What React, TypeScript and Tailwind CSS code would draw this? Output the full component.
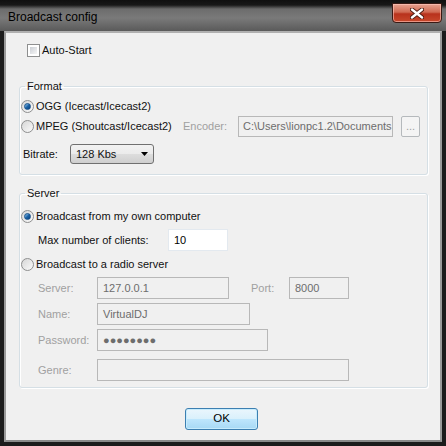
import React from 'react';

const font = { fontFamily: '"Liberation Sans", Arial, sans-serif' };

function Radio({ checked }: { checked?: boolean }) {
  return (
    <span className="w-[13px] h-[13px] rounded-full border border-[#8e8f8f] bg-gradient-to-br from-[#d6d6d6] to-[#fbfbfb] flex items-center justify-center shrink-0">
      {checked && (
        <span className="w-[7px] h-[7px] rounded-full bg-gradient-to-br from-[#9bd0f3] via-[#1b64a8] to-[#0b3f7a] border border-[#16508a]" />
      )}
    </span>
  );
}

function Checkbox() {
  return (
    <span className="w-[13px] h-[13px] border border-[#8e8f8f] bg-white p-[2px] shrink-0">
      <span className="block w-full h-full bg-gradient-to-br from-[#cbcfd5] to-[#f6f6f6]" />
    </span>
  );
}

function Field({ value, w, enabled }: { value: string; w: string; enabled?: boolean }) {
  return (
    <div
      className={`${w} h-[22px] border flex items-center px-[5px] text-[11px] ${
        enabled ? 'bg-white border-[#e3e9ef] text-black' : 'bg-[#f0f0f0] border-[#b8b8b8] text-[#6d6d6d]'
      }`}
    >
      {value}
    </div>
  );
}

export default function App() {
  return (
    <div className="w-[446px] h-[446px] bg-[#1c1c1c] flex flex-col overflow-hidden select-none" style={font}>
      {/* title bar */}
      <div className="h-[31px] shrink-0 flex items-start bg-[linear-gradient(180deg,#101010_0px,#181818_5px,#6c6c6c_9px,#7a7a7a_18px,#5a5a5a_31px)]">
        <div className="pt-[8px] pl-[8px] text-[12px] leading-[18px] text-black">Broadcast config</div>
        <div className="ml-auto mr-[4px] mt-[3px] w-[50px] h-[20px] rounded-b-[4px] border border-[#3a1a14] bg-[linear-gradient(180deg,#e7a392_0%,#d06a52_45%,#b8321c_55%,#c8492c_100%)] flex items-center justify-center shadow-[inset_0_0_0_1px_rgba(255,200,190,0.6)]">
          <svg width="14" height="11" viewBox="0 0 14 11">
            <path d="M2 1.5 L12 9.5 M12 1.5 L2 9.5" stroke="#4a1a10" strokeWidth="4.2" strokeLinecap="round" />
            <path d="M2 1.5 L12 9.5 M12 1.5 L2 9.5" stroke="#ffffff" strokeWidth="2.4" strokeLinecap="round" />
          </svg>
        </div>
      </div>

      {/* frame + client */}
      <div className="flex-1 flex px-[4px] pb-[4px] bg-[#1c1c1c]">
        <div className="flex-1 border-2 border-l-[#9a9a9a] border-t-[#b0b0b0] border-r-[#9a9a9a] border-b-[#8a8a8a] flex">
          <div className="flex-1 bg-[#f0f0f0] flex flex-col text-[11px] text-[#111]">
            {/* auto start */}
            <div className="flex items-center gap-[2px] pl-[21px] pt-[11px] h-[24px]">
              <Checkbox />
              <span>Auto-Start</span>
            </div>

            {/* Format */}
            <fieldset className="ml-[13px] mr-[12px] mt-[22px] border border-[#d5dfe5] rounded-[3px] shadow-[inset_1px_1px_0_#fff,1px_1px_0_#fff] pb-[10px]">
              <legend className="ml-[5px] px-[2px] leading-[14px]">Format</legend>
              <div className="flex items-center gap-[2px] pl-[1px] mt-[6px] h-[14px]">
                <Radio checked />
                <span>OGG (Icecast/Icecast2)</span>
              </div>
              <div className="flex items-center pl-[1px] mt-[3px] h-[21px]">
                <Radio />
                <span className="ml-[2px] w-[147px]">MPEG (Shoutcast/Icecast2)</span>
                <span className="text-[#a0a0a0] w-[55px]">Encoder:</span>
                <div className="w-[155px] h-[21px] border border-[#b8b8b8] bg-[#f0f0f0] text-[#6d6d6d] flex items-center pl-[4px] whitespace-nowrap overflow-hidden">
                  C:\Users\lionpc1.2\Documents
                </div>
                <div className="ml-[8px] w-[19px] h-[21px] rounded-[2px] border border-[#b5b9bc] bg-[#f4f4f4] text-[#a0a0a0] flex items-end justify-center pb-[4px] leading-none">
                  ...
                </div>
              </div>
              <div className="flex items-center pl-[3px] mt-[7px] h-[20px]">
                <span className="w-[47px]">Bitrate:</span>
                <div className="w-[84px] h-[20px] rounded-[3px] border border-[#707070] bg-[linear-gradient(180deg,#f2f2f2_0%,#ebebeb_50%,#dddddd_51%,#cfcfcf_100%)] flex items-center pl-[5px] pr-[5px]">
                  <span className="flex-1">128 Kbs</span>
                  <svg width="7" height="4" viewBox="0 0 7 4">
                    <path d="M0 0 H7 L3.5 4 Z" fill="#000" />
                  </svg>
                </div>
              </div>
            </fieldset>

            {/* Server */}
            <fieldset className="ml-[13px] mr-[12px] mt-[11px] border border-[#d5dfe5] rounded-[3px] shadow-[inset_1px_1px_0_#fff,1px_1px_0_#fff] pb-[6px]">
              <legend className="ml-[5px] px-[2px] leading-[14px]">Server</legend>
              <div className="flex items-center gap-[2px] pl-[1px] mt-[9px] h-[14px]">
                <Radio checked />
                <span>Broadcast from my own computer</span>
              </div>
              <div className="flex items-center pl-[18px] mt-[6px] h-[22px]">
                <span className="w-[130px]">Max number of clients:</span>
                <Field value="10" w="w-[60px]" enabled />
              </div>
              <div className="flex items-center gap-[2px] pl-[1px] mt-[6px] h-[14px]">
                <Radio />
                <span>Broadcast to a radio server</span>
              </div>
              <div className="flex items-center pl-[18px] mt-[6px] h-[22px] text-[#a0a0a0]">
                <span className="w-[59px]">Server:</span>
                <Field value="127.0.0.1" w="w-[132px]" />
                <span className="ml-[22px] w-[38px]">Port:</span>
                <Field value="8000" w="w-[60px]" />
              </div>
              <div className="flex items-center pl-[18px] mt-[4px] h-[22px] text-[#a0a0a0]">
                <span className="w-[59px]">Name:</span>
                <Field value="VirtualDJ" w="w-[153px]" />
              </div>
              <div className="flex items-center pl-[18px] mt-[4px] h-[22px] text-[#a0a0a0]">
                <span className="w-[59px]">Password:</span>
                <Field value="●●●●●●●●" w="w-[171px]" />
              </div>
              <div className="flex items-center pl-[18px] mt-[8px] h-[22px] text-[#a0a0a0]">
                <span className="w-[59px]">Genre:</span>
                <Field value="" w="w-[252px]" />
              </div>
            </fieldset>

            {/* OK */}
            <div className="pl-[179px] mt-[20px]">
              <button className="w-[73px] h-[22px] rounded-[3px] border border-[#3c7fb1] bg-[linear-gradient(180deg,#eaf6fd_0%,#d9f0fc_50%,#bee6fd_51%,#a7d9f5_100%)] shadow-[inset_0_0_0_1px_#c7ecfd] text-[11.5px] text-black">
                OK
              </button>
            </div>
          </div>
        </div>
      </div>
    </div>
  );
}
